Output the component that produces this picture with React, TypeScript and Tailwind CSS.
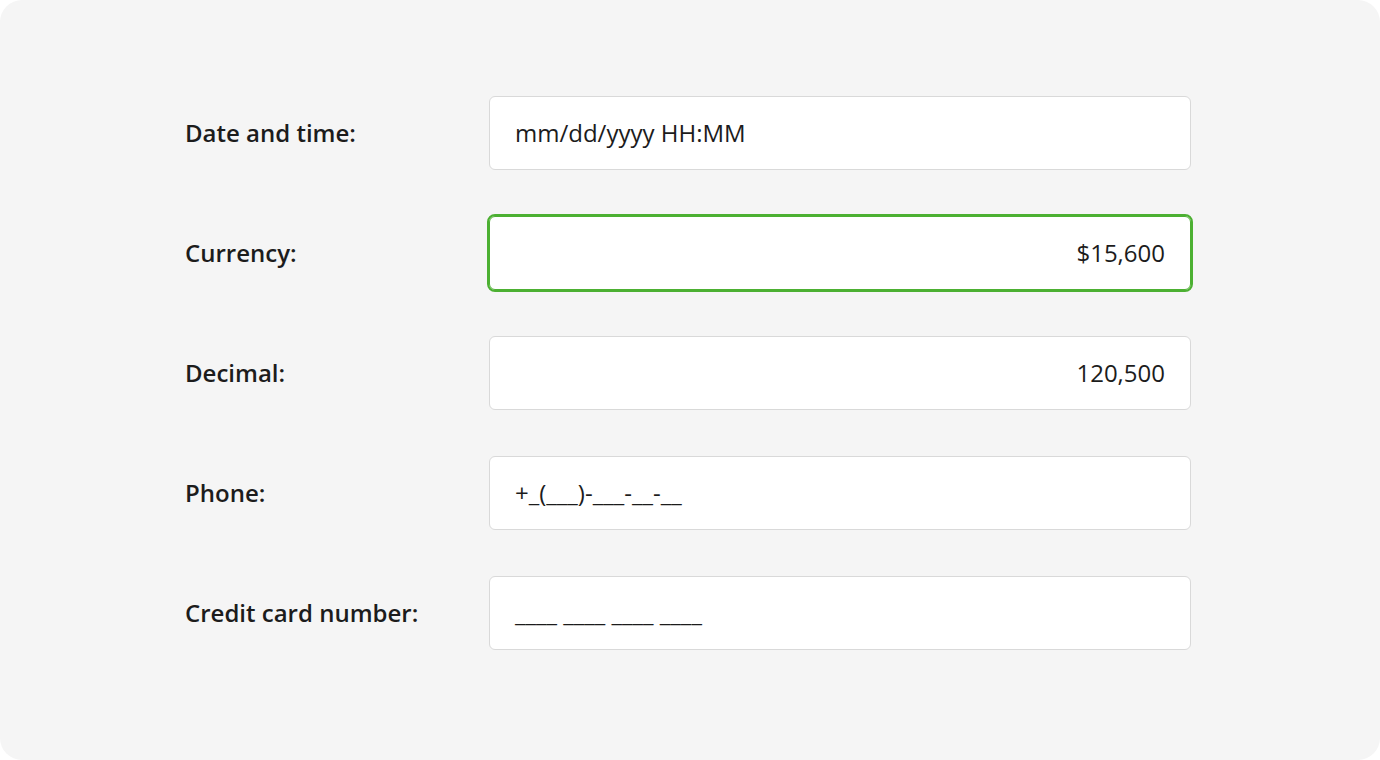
export default function App() {
  const rows = [
    { label: "Date and time:", value: "mm/dd/yyyy HH:MM", align: "left" },
    { label: "Currency:", value: "$15,600", align: "right", focused: true },
    { label: "Decimal:", value: "120,500", align: "right" },
    { label: "Phone:", value: "+_(___)-___-__-__", align: "left" },
    { label: "Credit card number:", value: "____ ____ ____ ____", align: "left" },
  ];

  return (
    <div className="w-[1380px] h-[760px] bg-white" style={{ fontFamily: '"Open Sans", "Noto Sans", sans-serif' }}>
      <div className="w-full h-full bg-[#f5f5f5] rounded-[22px] pt-[96px] pl-[185px]">
        <div className="flex flex-col gap-[46px]">
          {rows.map((row) => (
            <div key={row.label} className="grid grid-cols-[304px_702px] items-center">
              <span className="text-[24px] font-semibold text-[#1c1c1c]">{row.label}</span>
              <div
                className={
                  "h-[74px] bg-white rounded-[6px] border flex items-center px-[25px] text-[24px] text-[#1c1c1c] " +
                  (row.focused
                    ? "border-[#4cb032] outline-2 outline-[#4cb032] "
                    : "border-[#d9d9d9] ") +
                  (row.align === "right" ? "justify-end" : "justify-start")
                }
              >
                {row.value}
              </div>
            </div>
          ))}
        </div>
      </div>
    </div>
  );
}
